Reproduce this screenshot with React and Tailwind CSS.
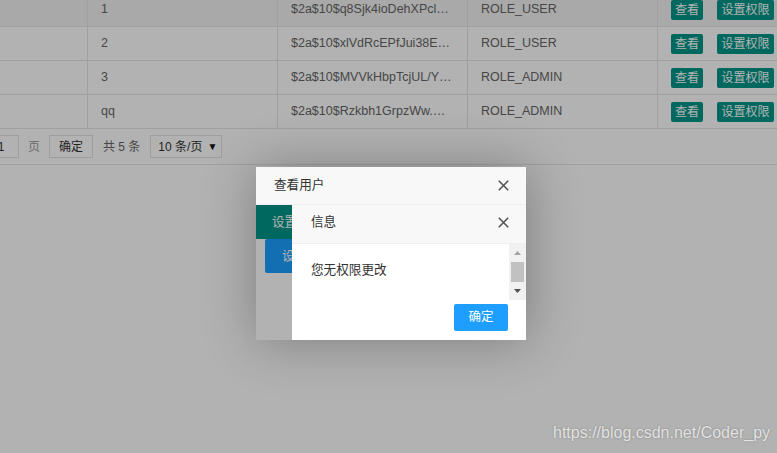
import React from 'react';

const rows = [
    { id: '1', pwd: '$2a$10$q8Sjk4ioDehXPcl…', role: 'ROLE_USER', hover: true },
    { id: '2', pwd: '$2a$10$xlVdRcEPfJui38E…', role: 'ROLE_USER' },
    { id: '3', pwd: '$2a$10$MVVkHbpTcjUL/Y…', role: 'ROLE_ADMIN' },
    { id: 'qq', pwd: '$2a$10$Rzkbh1GrpzWw.…', role: 'ROLE_ADMIN' },
];

function CloseIcon() {
    return (
        <svg width="11" height="11" viewBox="0 0 11 11" className="shrink-0">
            <path d="M0.8 0.8L10.2 10.2M10.2 0.8L0.8 10.2" stroke="#555" strokeWidth="1.6" />
        </svg>
    );
}

function UserRow({ row }) {
    return (
        <div className={`flex h-[34px] border-b border-[#e6e6e6] text-[12.5px] text-[#666] ${row.hover ? 'bg-[#f2f2f2]' : 'bg-white'}`}>
            <div className="w-[88px] shrink-0 border-r border-[#e6e6e6]" />
            <div className="flex w-[190px] shrink-0 items-center border-r border-[#e6e6e6] px-[13px]">{row.id}</div>
            <div className="flex w-[190px] shrink-0 items-center overflow-hidden whitespace-nowrap border-r border-[#e6e6e6] px-[13px]">{row.pwd}</div>
            <div className="flex w-[190px] shrink-0 items-center border-r border-[#e6e6e6] px-[13px]">{row.role}</div>
            <div className="flex flex-1 items-center whitespace-nowrap pl-[13px]">
                <button className="h-[20px] w-[32px] rounded-[2px] bg-[#009688] text-[12px] leading-[20px] text-white">查看</button>
                <button className="ml-[14px] h-[20px] w-[57px] rounded-[2px] bg-[#009688] text-[12px] leading-[20px] text-white">设置权限</button>
            </div>
        </div>
    );
}

function Pager() {
    return (
        <div className="flex h-[36px] items-center border-b border-[#e6e6e6] bg-white text-[12px] whitespace-nowrap">
            <div className="-ml-[17px] flex h-[23px] w-[36px] items-center justify-center border border-[#e2e2e2] text-[#333]">1</div>
            <span className="ml-[9px] text-[#999]">页</span>
            <div className="ml-[9px] flex h-[23px] w-[44px] items-center justify-center border border-[#e2e2e2] text-[#333]">确定</div>
            <span className="ml-[10px] text-[#666]">共 5 条</span>
            <div className="ml-[10px] flex h-[23px] w-[72px] items-center justify-between border border-[#e2e2e2] pl-[7px] pr-[4px] text-[#333]">
                <span>10 条/页</span>
                <span className="text-[10px] text-[#111]">▼</span>
            </div>
        </div>
    );
}

function InfoDialog() {
    return (
        <div className="absolute bottom-0 left-[36px] right-0 top-0 flex flex-col bg-white">
            <div className="flex h-[39px] shrink-0 items-center justify-between border-b border-[#eee] bg-[#f8f8f8] pb-[3px] pl-[19px] pr-[17px] text-[12.6px] text-[#333]">
                <span>信息</span>
                <CloseIcon />
            </div>
            <div className="flex h-[56px] shrink-0">
                <div className="flex-1 pl-[19px] pt-[16px] text-[12.6px] leading-[20px] text-[#333]">您无权限更改</div>
                <div className="flex w-[17px] flex-col items-center bg-[#f1f1f1]">
                    <div className="flex h-[17px] w-full items-center justify-center">
                        <svg width="7" height="4" viewBox="0 0 7 4"><path d="M3.5 0L7 4H0Z" fill="#a3a3a3" /></svg>
                    </div>
                    <div className="mt-[1px] h-[20px] w-[13px] bg-[#c1c1c1]" />
                    <div className="flex flex-1 w-full items-center justify-center">
                        <svg width="7" height="4" viewBox="0 0 7 4"><path d="M0 0H7L3.5 4Z" fill="#505050" /></svg>
                    </div>
                </div>
            </div>
            <div className="flex justify-end pr-[18px] pt-[4px]">
                <button className="h-[27px] w-[54px] rounded-[2px] bg-[#1e9fff] text-[12.5px] text-white">确定</button>
            </div>
        </div>
    );
}

function ViewDialog() {
    return (
        <div className="absolute left-[256px] top-[167px] flex h-[173px] w-[270px] flex-col overflow-hidden bg-white shadow-[1px_1px_50px_rgba(0,0,0,0.3)]">
            <div className="flex h-[38px] shrink-0 items-center justify-between border-b border-[#eee] bg-[#f8f8f8] pb-[1px] pl-[18px] pr-[17px] text-[12.6px] text-[#333]">
                <span>查看用户</span>
                <CloseIcon />
            </div>
            <div className="relative flex-1 overflow-hidden bg-white">
                <div className="flex flex-col items-start whitespace-nowrap text-[12.6px] text-white">
                    <button className="h-[34px] bg-[#009688] px-[16px]">设置为管理员</button>
                    <button className="ml-[9px] h-[34px] rounded-[2px] bg-[#1e9fff] px-[17px]">设置为普通用户</button>
                </div>
                <div className="absolute inset-0 bg-black/30" />
                <InfoDialog />
            </div>
        </div>
    );
}

export default function App() {
    return (
        <div className="relative h-[453px] w-[777px] overflow-hidden bg-white font-['Liberation_Sans','Noto_Sans_CJK_SC',sans-serif]">
            <div className="-mt-[7px]">
                {rows.map((row) => (
                    <UserRow key={row.id} row={row} />
                ))}
                <Pager />
            </div>
            <div className="absolute inset-0 bg-black/30" />
            <ViewDialog />
            <div className="absolute left-[553px] top-[424px] text-[16px] leading-[18px] text-[#e2e2e2] [text-shadow:0_0_2px_rgba(0,0,0,0.3)]">
                https://blog.csdn.net/Coder_py
            </div>
        </div>
    );
}
